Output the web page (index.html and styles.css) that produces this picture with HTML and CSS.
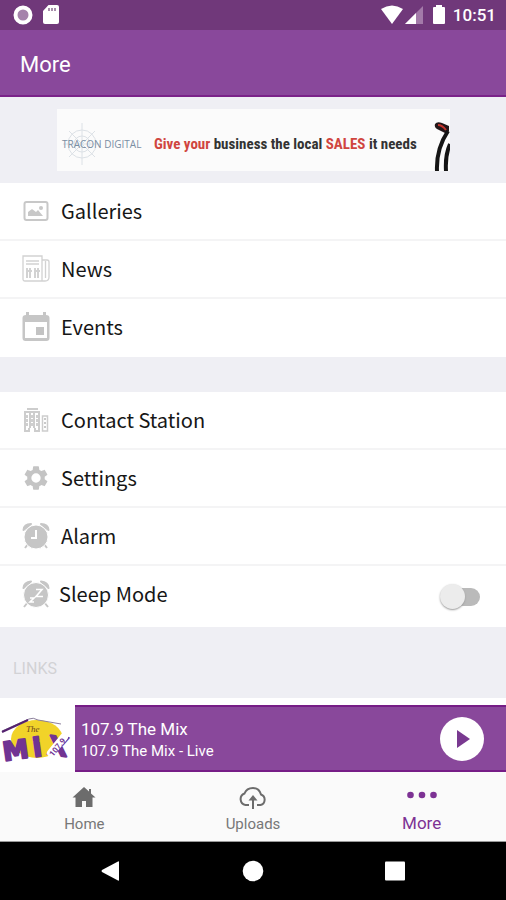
FILE: index.html
```html
<!DOCTYPE html>
<html lang="en">
<head>
<meta charset="utf-8">
<meta name="viewport" content="width=device-width, initial-scale=1">
<title>More</title>
<link rel="stylesheet" href="styles.css">
</head>
<body>
<div class="status">
  <svg width="20" height="20" viewBox="0 0 20 20"><circle cx="10" cy="10" r="7.5" fill="#a583ab" stroke="#fff" stroke-width="4"/></svg>
  <svg width="16" height="20" viewBox="0 0 16 20"><path d="M5.500 0H14a2 2 0 0 1 2 2v15a2 2 0 0 1-2 2H2a2 2 0 0 1-2-2V6z" fill="#fff"/><path d="M6 3v3M9 3v3M12 3v3" stroke="#8c6a91" stroke-width="1.500"/></svg>
  <span class="spacer"></span>
  <svg width="22" height="20" viewBox="0 0 22 20"><path d="M0 4Q11-3 22 4L11 19z" fill="#fff"/></svg>
  <svg width="18" height="20" viewBox="0 0 18 20"><path d="M18 1v18H0z" fill="#a37aa9"/><path d="M11 8v11H0z" fill="#fff"/></svg>
  <svg class="battery" width="12" height="20" viewBox="0 0 12 20"><path d="M3 2V0h6v2h2q1 0 1 1v15q0 1-1 1H1q-1 0-1-1V3q0-1 1-1z" fill="#fff"/></svg>
  <time>10:51</time>
</div>
<header class="appbar"><h1>More</h1></header>
<main>
  <section class="banner">
    <a class="ad" href="#ad">
      <span class="brand">
        <svg class="target" width="40" height="44" viewBox="0 0 40 44" fill="none" stroke="#dce1e6"><circle cx="20" cy="22" r="14"/><circle cx="20" cy="22" r="8"/><path d="M20 1v42M1 22h38M7 9l26 26M33 9L7 35"/></svg>
        <span class="brand-name">TRACON DIGITAL</span>
      </span>
      <span class="slogan"><em>Give your</em> business the local <em>SALES</em> it needs</span>
      <svg class="golf" width="16" height="50" viewBox="0 0 16 50"><path d="M1 3Q3 0 8 2l7 3v5q-2 3-4 2L3 8Q0 6 1 3z" fill="#231719"/><path d="M4 4q4 0 8 5" fill="none" stroke="#c5352d" stroke-width="2"/><path d="M14 10Q2 28 3 50" fill="none" stroke="#151515" stroke-width="4"/><path d="M16 23Q11 34 12 50" fill="none" stroke="#151515" stroke-width="4"/></svg>
    </a>
  </section>
  <nav class="list">
    <a class="row" href="#galleries">
      <svg width="28" height="28" viewBox="0 0 28 28"><rect x="2.500" y="5" width="23" height="18" rx="2" fill="none" stroke="#c8c8c8" stroke-width="2"/><path d="M6 19v-4l4-3 4 3 2-2 5 6z" fill="#c8c8c8"/><circle cx="19" cy="11" r="2" fill="#c8c8c8"/></svg>
      <span>Galleries</span></a>
    <a class="row" href="#news">
      <svg width="28" height="28" viewBox="0 0 28 28" fill="none" stroke="#d2d2d2" stroke-width="1.300"><path d="M1 1h19v25H3q-2 0-2-2zM20 5h5q2 0 2 2v15q0 4-4 4h-3M23.500 6v17"/><path d="M4 6h13M4 9h13" stroke-width="1.500"/><path d="M5 13v10M8 13v10M13 13v10M16 13v10" stroke-width="2"/><path d="M4 16h6M12 16h6" stroke-width="2"/></svg>
      <span>News</span></a>
    <a class="row" href="#events">
      <svg width="28" height="30" viewBox="0 0 28 30"><path fill-rule="evenodd" d="M4 3V0h3v3h14V0h3v3q3.500 0 3.500 3v20q0 3-3 3h-21q-3 0-3-3V6Q.5 3 4 3zM3 10v16h22V10z" fill="#c6c6c6"/><rect x="14" y="15" width="8" height="8" fill="#c3c3c3"/></svg>
      <span>Events</span></a>
  </nav>
  <nav class="list second">
    <a class="row" href="#contact">
      <svg width="28" height="28" viewBox="0 0 28 28"><path d="M5 3h11M2 6h16M3 6v19h4v-3M17 6v19h-4v-3M8 6v16M12 6v16" fill="none" stroke="#cdcdcd" stroke-width="2"/><path d="M5 9v12M10 9v12M15 9v12" stroke="#cfcfcf" stroke-width="2" stroke-dasharray="3 1"/><path d="M20.500 10h5v15h-5z" fill="none" stroke="#cdcdcd" stroke-width="1.500"/><path d="M23 12v12" stroke="#c9c9c9" stroke-width="2" stroke-dasharray="2 2"/></svg>
      <span>Contact Station</span></a>
    <a class="row" href="#settings">
      <svg width="28" height="28" viewBox="0 0 24 24"><path d="M19.430 12.980c.04-.32.07-.64.07-.98s-.03-.66-.07-.98l2.110-1.650c.19-.15.24-.42.12-.64l-2-3.460c-.12-.22-.39-.3-.61-.22l-2.490 1c-.52-.4-1.080-.73-1.690-.98l-.38-2.650C14.460 2.180 14.250 2 14 2h-4c-.25 0-.46.18-.49.42l-.38 2.650c-.61.25-1.170.59-1.690.98l-2.490-1c-.23-.09-.49 0-.61.22l-2 3.460c-.13.22-.07.49.12.64l2.110 1.650c-.04.32-.07.65-.07.98s.03.66.07.98l-2.110 1.650c-.19.15-.24.42-.12.64l2 3.460c.12.22.39.3.61.22l2.490-1c.52.4 1.080.73 1.690.98l.38 2.650c.03.24.24.42.49.42h4c.25 0 .46-.18.49-.42l.38-2.650c.61-.25 1.170-.59 1.690-.98l2.490 1c.23.09.49 0 .61-.22l2-3.460c.12-.22.07-.49-.12-.64zM12 16a4 4 0 1 1 0-8 4 4 0 0 1 0 8z" fill="#c4c4c4"/></svg>
      <span>Settings</span></a>
    <a class="row" href="#alarm">
      <svg width="28" height="28" viewBox="0 0 28 28"><path d="M6 22l-3 4M22 22l3 4" stroke="#c6c6c6" stroke-width="2"/><path d="M1.500 8Q2 2 9 2zM26.500 8q-.5-6-7.500-6z" fill="#c6c6c6" stroke="#c6c6c6" stroke-width="2" stroke-linejoin="round"/><circle cx="14" cy="15" r="12" fill="#c6c6c6" stroke="#fff"/><path d="M14 8v8H9" fill="none" stroke="#fff" stroke-width="2"/></svg>
      <span>Alarm</span></a>
    <div class="row sleep">
      <svg width="28" height="28" viewBox="0 0 28 28"><path d="M6 22l-4 5M22 22l4 5" stroke="#c6c6c6" stroke-width="2"/><path d="M1.500 8Q2 2 9 1.500zM26.500 8q-.5-6-7.500-6.500z" fill="#c6c6c6" stroke="#c6c6c6" stroke-width="2" stroke-linejoin="round"/><circle cx="14" cy="15" r="12.500" fill="#c6c6c6" stroke="#fff"/><path d="M14 9.500h6l-6 7h7M8 18h4l-4 4h4" fill="none" stroke="#fff" stroke-width="1.600"/></svg>
      <label for="sleep">Sleep Mode</label>
      <input id="sleep" class="switch" type="checkbox" role="switch">
    </div>
  </nav>
  <h2 class="links">LINKS</h2>
</main>
<section class="player">
  <svg class="cover" width="75" height="67" viewBox="0 0 75 67">
    <ellipse cx="37" cy="34" rx="26" ry="19" fill="#f1d329"/>
    <path d="M2 26L29 14q4-2 9 1l23 4" fill="none" stroke="#8c7f9b"/><path d="M2 27L28 15" stroke="#54226f" stroke-width="2"/>
    <text class="the" x="26" y="27">The</text>
    <text class="mix" transform="translate(4 56) rotate(-8)">M</text>
    <text class="mix" transform="translate(34 52) rotate(-8)">i</text>
    <text class="mix" transform="translate(47 49) rotate(8)">X</text>
    <path d="M51 48L64 32" stroke="#fff" stroke-width="8" stroke-linecap="round"/>
    <text class="freq" transform="translate(53 52) rotate(-51)">107.9</text>
  </svg>
  <div class="track"><strong>107.9 The Mix</strong><span>107.9 The Mix - Live</span></div>
  <button class="play" aria-label="Play"><svg width="44" height="44" viewBox="0 0 44 44"><path d="M17 13l13 9-13 9z" fill="#793990"/></svg></button>
</section>
<nav class="tabs">
  <a href="#home"><svg width="24" height="24" viewBox="0 0 24 24"><path d="M12 2L.5 12.500h3V22H10v-6h4v6h6.500v-9.500h3L19 8.500V4h-2v2.500z" fill="#6c6c6c"/></svg><span>Home</span></a>
  <a href="#uploads"><svg width="30" height="24" viewBox="0 0 30 24"><path d="M11 20H7.500a6 6 0 0 1-1-11.500C8 4.500 11 3 15 3c4.500 0 7 3 8 6.500a5.500 5.500 0 0 1-.5 10.500H19" fill="none" stroke="#6c6c6c" stroke-width="2"/><path d="M15 24V13" stroke="#6c6c6c" stroke-width="2"/><path d="M10.500 15.500L15 10l4.500 5.500z" fill="#6c6c6c"/></svg><span>Uploads</span></a>
  <a class="active" href="#more"><svg width="30" height="20" viewBox="0 0 30 20" fill="#7d3294"><circle cx="3.500" cy="10" r="3.300"/><circle cx="15" cy="10" r="3.300"/><circle cx="26.500" cy="10" r="3.300"/></svg><span>More</span></a>
</nav>
<div class="system">
  <button aria-label="Back"><svg width="22" height="22" viewBox="0 0 22 22"><path d="M19 2v18q0 1-1 .5L2 12q-1-1 0-2l16-8.500q1-.5 1 .5z" fill="#fff"/></svg></button>
  <button aria-label="Home screen"><svg width="22" height="22" viewBox="0 0 22 22"><circle cx="11" cy="11" r="10.300" fill="#fff"/></svg></button>
  <button aria-label="Recent apps"><svg width="22" height="22" viewBox="0 0 22 22"><rect x="1" y="1.500" width="20" height="19" rx="1" fill="#fff"/></svg></button>
</div>
</body>
</html>
```
FILE: styles.css
```css
* { box-sizing: border-box; }
body {
  margin: 0;
  min-height: 100vh;
  display: flex;
  flex-direction: column;
  background: #fff;
  font-family: Roboto, sans-serif;
}
svg { display: block; flex: none; }
a { color: inherit; text-decoration: none; }
button { border: 0; padding: 0; background: none; }

.status {
  display: flex;
  align-items: center;
  gap: 12px;
  height: 30px;
  padding: 0 10px 0 13px;
  background: #70387a;
  color: #fff;
}
.status .spacer { flex: 1; }
.status time { font-size: 17px; font-weight: 500; line-height: 30px; margin-left: -4px; }
.status svg + svg { margin-left: -2px; }
.status .spacer + svg + svg { margin-left: -10px; }

.appbar {
  height: 67px;
  padding: 4px 20px 0;
  display: flex;
  align-items: center;
  background: #89489b;
  border-bottom: 2px solid #7a2289;
  color: #fff;
}
.appbar h1 { margin: 0; font-size: 22px; font-weight: 400; line-height: 28px; }

main { flex: 1; background: #efeff4; }
.banner { display: flex; padding: 12px 56px 12px 57px; }
.ad {
  flex: 1;
  display: flex;
  align-items: center;
  height: 62px;
  padding: 8px 0 0 5px;
  background: #fbfbfb;
  overflow: hidden;
}
.brand { flex: none; position: relative; width: 92px; }
.brand-name {
  position: absolute;
  left: 0;
  top: 16px;
  font-family: "Open Sans", sans-serif;
  font-size: 10px;
  line-height: 12px;
  color: #7a8ea3;
  white-space: nowrap;
}
.slogan {
  flex: 1;
  font-family: "Roboto Condensed", Roboto, sans-serif;
  font-size: 15px;
  font-weight: 700;
  line-height: 24px;
  color: #333;
  white-space: nowrap;
}
.slogan em { font-style: normal; color: #d0453f; }
.golf { align-self: flex-end; }

.list { background: #fff; }
.second { margin-top: 35px; }
.row {
  display: flex;
  align-items: center;
  gap: 11px;
  height: 58px;
  padding: 0 26px 0 22px;
  border-bottom: 2px solid #f4f4f5;
  font-family: "Noto Sans CJK SC", sans-serif;
  font-size: 20px;
  line-height: 28px;
  color: #161616;
}
.row:last-child { border-bottom-color: #fff; }
.sleep { height: 61px; gap: 9px; padding-bottom: 3px; }
.sleep label { flex: 1; }
.switch {
  appearance: none;
  position: relative;
  width: 36px;
  height: 18px;
  margin: 6px 0 0;
  border-radius: 9px;
  background: #bababa;
}
.switch::before {
  content: "";
  position: absolute;
  left: -4px;
  top: -4px;
  width: 25px;
  height: 25px;
  border-radius: 50%;
  background: #ececec;
  box-shadow: 0 1px 2px #999;
}
.switch:checked::before { left: 15px; }
.links {
  margin: 0;
  padding: 30px 13px 17px;
  font-size: 16px;
  font-weight: 400;
  line-height: 24px;
  color: #d2d2d5;
}

.player {
  display: flex;
  align-items: center;
  margin-top: 7px;
  background: #89489b;
  box-shadow: inset 0 2px #761d86, inset 0 -2px #761d86;
  color: #fff;
}
.cover { background: #fff; }
.freq { font: 700 8px Roboto, sans-serif; fill: #713493; }
.the { font: italic 9px "Liberation Serif", serif; fill: #6b4520; }
.mix { font: 700 26px "DejaVu Sans", sans-serif; fill: #713493; stroke: #713493; stroke-width: 2px; stroke-linejoin: round; }
.track { flex: 1; display: flex; flex-direction: column; padding: 2px 0 0 6px; }
.track strong { font-size: 17px; font-weight: 400; line-height: 22px; }
.track span { font-size: 15px; line-height: 22px; }
.play { margin-right: 22px; border-radius: 50%; background: #fff; }

.tabs {
  display: grid;
  grid-template-columns: repeat(3, 1fr);
  height: 70px;
  padding-top: 13px;
  background: #fafafa;
  border-bottom: 1px solid #999;
}
.tabs a {
  display: flex;
  flex-direction: column;
  align-items: center;
  gap: 5px;
  font-size: 15px;
  line-height: 20px;
  color: #777;
}
.tabs .active { color: #7d3294; font-size: 17px; gap: 8px; }

.system {
  display: flex;
  justify-content: center;
  align-items: center;
  gap: 120px;
  height: 58px;
  background: #000;
}
```
